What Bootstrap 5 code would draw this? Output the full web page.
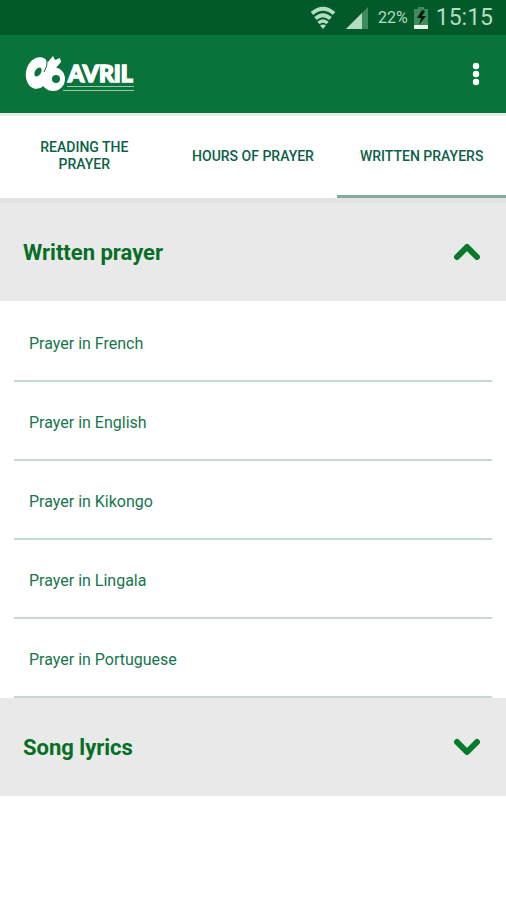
<!DOCTYPE html>
<html lang="en">
<head>
<meta charset="utf-8">
<meta name="viewport" content="width=device-width, initial-scale=1">
<title>06 Avril</title>
<link href="https://cdn.jsdelivr.net/npm/bootstrap@5.3.0/dist/css/bootstrap.min.css" rel="stylesheet">
<style>
body { font-family: Roboto, "Liberation Sans", sans-serif; background: #fff; color: #0b7040; }
.status-bar { height: 35px; background: #025a2b; color: #b5dbc1; padding-right: 13px; gap: 6px; }
.battery-text { font-size: 16px; padding-left: 2px; }
.clock { font-size: 23px; line-height: 36px; padding-left: 2px; }
.app-bar { height: 78px; background: #08733b; padding: 0 16px 0 25px; }
.menu-btn { width: 28px; height: 48px; }
.tabs { height: 90px; border-top: 3px solid #e3ebe6; border-bottom: 5px solid #e3e3e3; }
.tabs .nav-link { height: 82px; font-size: 14px; line-height: 17px; font-weight: 500; color: #0c6147; border-bottom: 3px solid transparent; padding: 1px 16px 0; }
.tabs .nav-link.active { border-bottom-color: #83ae9e; }
.section-toggle { height: 98px; background: #e9e9e9; color: #066e25; font-size: 22px; font-weight: 700; padding: 0 25px 0 23px; }
.prayers { padding: 2px 14px 0; }
.prayers .list-group-item { height: 79px; font-size: 16px; color: #17764c; border-color: #c6dad3; border-width: 0 0 2px; padding: 4px 15px 0; }
.wordmark { font-family: Lato, sans-serif; font-weight: 900; font-size: 23px; }
</style>
<script src="https://cdn.jsdelivr.net/npm/bootstrap@5.3.0/dist/js/bootstrap.bundle.min.js" defer></script>
</head>
<body>
<div class="status-bar d-flex align-items-center justify-content-end">
  <svg width="26" height="24" viewBox="0 0 26 24" fill="none" stroke="#b5dbc1" stroke-width="4" aria-label="Wi-Fi">
    <path d="M2 7.500Q13 -2 24 7.500M5.500 12.500Q13 6 20.500 12.500" /><path d="M8.500 17Q13 13 17.500 17" stroke-width="3.500"/><path d="M10 19.500Q13 17.500 16 19.500L13 23Z" fill="#b5dbc1" stroke="none"/>
  </svg>
  <svg width="28" height="24" viewBox="0 0 28 24" aria-label="Signal"><path d="M4 23L26 1V23Z" fill="#3e8b5d"/><path d="M4 23L20 7V23Z" fill="#b5dbc1"/></svg>
  <span class="battery-text">22%</span>
  <svg width="14" height="22" viewBox="0 0 14 22" aria-label="Charging"><path d="M4 0H10V2H14V22H0V2H4Z" fill="#3e8b5d"/><path d="M0 18H14V22H0Z" fill="#e4f2e7"/><path d="M8 3L3 11H7L5 18L12 9H8L11 4Z" fill="#041c0d"/></svg>
  <span class="clock">15:15</span>
</div>
<header class="app-bar d-flex align-items-center justify-content-between">
  <a href="#" aria-label="06 Avril">
    <svg class="d-block" width="112" height="38" viewBox="0 0 112 38">
      <g fill="#fff"><ellipse cx="13" cy="18" rx="12" ry="16" transform="rotate(12 13 18)"/><circle cx="28" cy="24" r="12"/><path d="M18 18Q21 8 28 1L30 5L35 3L36 7L30 14Z"/></g>
      <g fill="#08733b"><ellipse cx="13" cy="17" rx="3" ry="5" transform="rotate(30 13 17)"/><circle cx="31" cy="24" r="4"/></g>
      <path d="M22 4Q23 11 19 17" fill="none" stroke="#08733b" stroke-width="1"/>
      <text class="wordmark" x="43" y="27" fill="#fff" stroke="#fff" stroke-width="1.500">AVRIL</text>
      <path d="M42 31.500H109M38 35.500H109" stroke="#9cc9ae" stroke-width="1"/>
    </svg>
  </a>
  <button class="menu-btn btn border-0 p-0" aria-label="More options"><svg width="8" height="24" viewBox="0 0 8 24" fill="#fff"><circle cx="4" cy="4" r="3.200"/><circle cx="4" cy="12" r="3.200"/><circle cx="4" cy="20" r="3.200"/></svg></button>
</header>
<nav class="tabs nav nav-fill row row-cols-3 g-0">
  <a class="nav-link d-flex align-items-center justify-content-center" href="#">READING THE PRAYER</a>
  <a class="nav-link d-flex align-items-center justify-content-center text-nowrap" href="#">HOURS OF PRAYER</a>
  <a class="nav-link active d-flex align-items-center justify-content-center text-nowrap" href="#" aria-current="page">WRITTEN PRAYERS</a>
</nav>
<main>
  <button class="section-toggle btn rounded-0 border-0 w-100 d-flex align-items-center justify-content-between" data-bs-toggle="collapse" data-bs-target="#written" aria-expanded="true">
    Written prayer
    <svg width="28" height="18" viewBox="0 0 28 18" fill="none" stroke="#067a2b" stroke-width="6" stroke-linecap="round" stroke-linejoin="round"><path d="M4 14L14 4L24 14"/></svg>
  </button>
  <div id="written" class="collapse show">
    <div class="prayers list-group rounded-0">
      <a class="list-group-item d-flex align-items-center" href="#">Prayer in French</a>
      <a class="list-group-item d-flex align-items-center" href="#">Prayer in English</a>
      <a class="list-group-item d-flex align-items-center" href="#">Prayer in Kikongo</a>
      <a class="list-group-item d-flex align-items-center" href="#">Prayer in Lingala</a>
      <a class="list-group-item d-flex align-items-center" href="#">Prayer in Portuguese</a>
    </div>
  </div>
  <button class="section-toggle btn rounded-0 border-0 w-100 d-flex align-items-center justify-content-between" data-bs-toggle="collapse" data-bs-target="#lyrics" aria-expanded="false">
    Song lyrics
    <svg width="28" height="18" viewBox="0 0 28 18" fill="none" stroke="#067a2b" stroke-width="6" stroke-linecap="round" stroke-linejoin="round"><path d="M4 4L14 14L24 4"/></svg>
  </button>
  <div id="lyrics" class="collapse"></div>
</main>
</body>
</html>
